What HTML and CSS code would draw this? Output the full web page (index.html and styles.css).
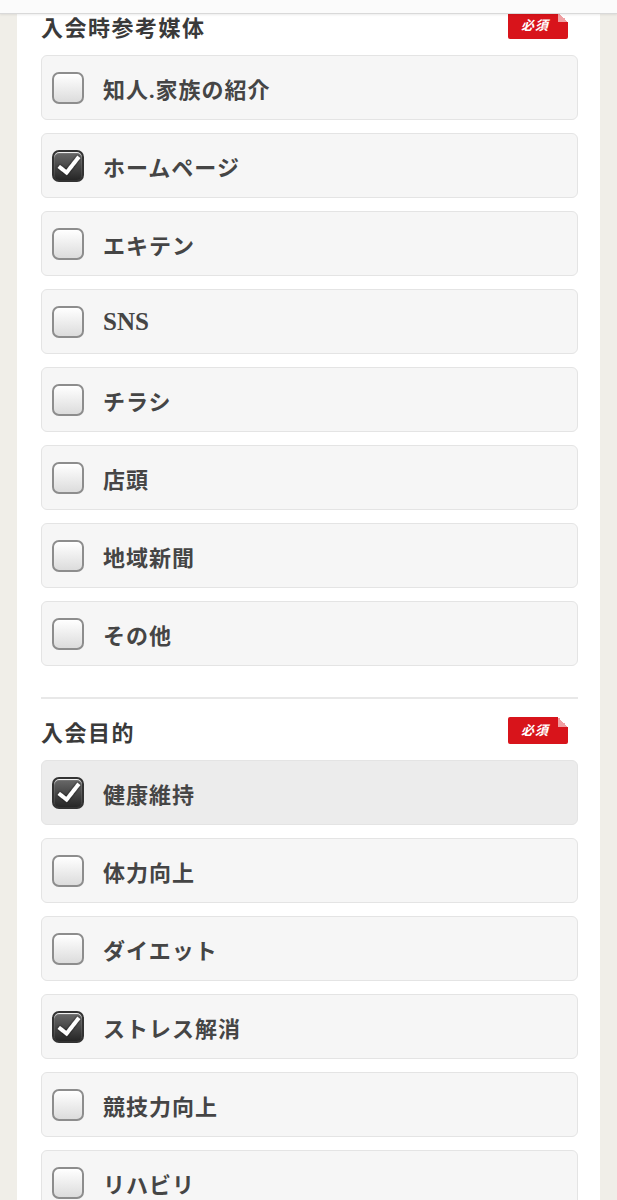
FILE: index.html
```html
<!DOCTYPE html>
<html>
<head>
  <meta name="viewport" content="width=device-width, initial-scale=1">
  <link rel="stylesheet" href="styles.css">
</head>
<body>

<div class="topbar"></div>

<div class="page">
  <div class="panel">

    <!-- 入会時参考媒体 -->
    <div class="field">
      <div class="field-head">
        <h2>入会時参考媒体</h2>
        <span class="req">必須</span>
      </div>
      <ul class="choices">
        <li class="choice"><span class="box"></span>知人.家族の紹介</li>
        <li class="choice"><span class="box checked"></span>ホームページ</li>
        <li class="choice"><span class="box"></span>エキテン</li>
        <li class="choice"><span class="box"></span><span class="latin">SNS</span></li>
        <li class="choice"><span class="box"></span>チラシ</li>
        <li class="choice"><span class="box"></span>店頭</li>
        <li class="choice"><span class="box"></span>地域新聞</li>
        <li class="choice"><span class="box"></span>その他</li>
      </ul>
    </div>

    <hr class="divider">

    <!-- 入会目的 -->
    <div class="field">
      <div class="field-head">
        <h2>入会目的</h2>
        <span class="req">必須</span>
      </div>
      <ul class="choices">
        <li class="choice active"><span class="box checked"></span>健康維持</li>
        <li class="choice"><span class="box"></span>体力向上</li>
        <li class="choice"><span class="box"></span>ダイエット</li>
        <li class="choice"><span class="box checked"></span>ストレス解消</li>
        <li class="choice"><span class="box"></span>競技力向上</li>
        <li class="choice"><span class="box"></span>リハビリ</li>
      </ul>
    </div>

  </div>
</div>

</body>
</html>
```

FILE: styles.css
```css
body {
  margin: 0;
  background-color: #f0eee8;
  font-family: "Liberation Serif", "Noto Sans CJK JP", serif;
  color: #3e3e3e;
}

.topbar {
  height: 13px;
  background-color: #fbfbfb;
  border-bottom: 1px solid #d9d9d9;
  box-shadow: 0 1px 2px rgba(0, 0, 0, 0.08);
  position: relative;
  z-index: 2;
}

.page {
  padding: 0 17px;
}

.panel {
  background-color: #fff;
  padding: 0 22px 0 24px;
  min-height: 1186px;
}

.field-head {
  display: flex;
  justify-content: space-between;
  align-items: center;
  height: 27px;
  padding-right: 10px;
  margin-bottom: 16px;
}

.field:first-child .field-head {
  margin-top: -2px;
}

.field-head h2 {
  margin: 0;
  font-size: 22px;
  font-weight: 700;
  color: #3a3a3a;
  letter-spacing: 1.5px;
}

/* red "required" tag with folded corner */
.req {
  position: relative;
  width: 60px;
  height: 27px;
  background-color: #d8141b;
  border-radius: 2px;
  color: #fff;
  font-size: 13px;
  font-weight: 700;
  font-style: italic;
  line-height: 27px;
  text-indent: 13px;
  letter-spacing: 1px;
  box-sizing: border-box;
}

.req::after {
  content: '';
  position: absolute;
  top: 0;
  right: 0;
  width: 10px;
  height: 10px;
  background: linear-gradient(45deg, #f0a0a3 50%, #fff 50%);
}

.choices {
  list-style: none;
  margin: 0;
  padding: 0;
  display: flex;
  flex-direction: column;
  gap: 13px;
}

.choice {
  display: flex;
  align-items: center;
  height: 63px;
  padding-left: 10px;
  background-color: #f6f6f6;
  border: 1px solid #e4e4e4;
  border-radius: 6px;
  font-size: 22px;
  font-weight: 700;
  color: #454545;
  letter-spacing: 1px;
}

.choice .latin {
  font-size: 25px;
  letter-spacing: 0;
}

.choice.active {
  background-color: #ececec;
}

.box {
  width: 28px;
  height: 28px;
  margin-right: 19px;
  border: 2px solid #8d8d8d;
  border-radius: 7px;
  background: linear-gradient(#ffffff, #dcdcdc);
  box-shadow: inset 0 1px 1px #fff;
  display: flex;
  align-items: center;
  justify-content: center;
  flex-shrink: 0;
}

.box.checked {
  border-color: #333;
  background: linear-gradient(#6a6a6a, #262626);
}

.box.checked::after {
  content: '';
  width: 8px;
  height: 18px;
  margin-top: -6px;
  margin-left: 2px;
  border-right: 4px solid #fff;
  border-bottom: 4px solid #fff;
  transform: rotate(38deg);
  filter: drop-shadow(0 0 1px #111);
}

.divider {
  border: none;
  border-top: 2px solid #e8e8e8;
  margin: 31px 0 18px;
}
```
